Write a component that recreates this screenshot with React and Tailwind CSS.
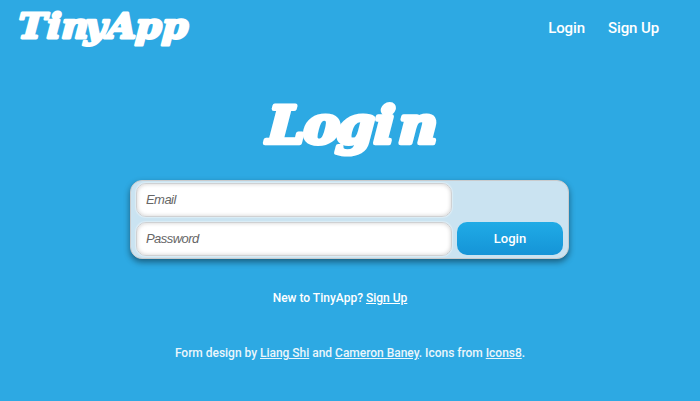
function Wordmark({ text, xs, baseline, size, stroke, stretch, className }) {
  return (
    <svg
      className={className}
      fill="white"
      stroke="white"
      strokeWidth={stroke}
      strokeLinejoin="round"
      fontFamily="'DejaVu Serif', serif"
      fontWeight="700"
      fontStyle="italic"
      fontSize={size}
    >
      <text x={xs} y="0" transform={`translate(0 ${baseline}) skewX(-3) scale(${stretch} 1)`}>{text}</text>
    </svg>
  );
}

function Field({ type, placeholder }) {
  return (
    <input
      type={type}
      placeholder={placeholder}
      className="block h-[34px] w-[316px] rounded-[10px] border border-[#cfd1d3] bg-white px-[9px] pb-px font-['Liberation_Sans',sans-serif] text-[13px] italic tracking-[-0.55px] shadow-[inset_0_0_4px_rgba(0,0,0,0.2),0_0_1px_1px_rgba(255,255,255,0.35)] outline-none placeholder:text-[#666666]"
    />
  );
}

export default function App() {
  return (
    <div className="flex h-[401px] w-[700px] flex-col overflow-hidden bg-[#2da9e3] font-[Roboto,sans-serif] font-medium text-white">
      <header className="flex h-14 shrink-0 items-center justify-between pr-[41px]">
        <Wordmark text="TinyApp" xs="16.5 43 56.5 78 99 125 149.5" baseline="38" size="34.5" stroke="2.8" stretch="1.08" className="h-14 w-[200px]" />
        <nav className="flex gap-[23px] text-[15px] leading-6 tracking-[-0.1px]">
          <a href="#login">Login</a>
          <a href="#signup">Sign Up</a>
        </nav>
      </header>
      <main className="flex flex-col items-center">
        <h1 className="mt-9">
          <Wordmark text="Login" xs="15.5 50 81 116.5 139.5" baseline="50.5" size="51" stroke="4.5" stretch="1.06" className="block h-[88px] w-[200px]" />
        </h1>
        <form className="mr-px flex h-[79px] w-[439px] items-end gap-[5px] rounded-xl border border-[#c9cbcd] bg-[#cae3f1] pb-[2px] pl-[5px] shadow-[0_3px_6px_rgba(0,0,0,0.45)]">
          <div className="flex flex-col gap-[5px]">
            <Field type="text" placeholder="Email" />
            <Field type="password" placeholder="Password" />
          </div>
          <button type="button" className="mb-px h-[33px] w-[106px] rounded-[10px] bg-linear-to-b from-[#20abe6] to-[#1594d7] text-[13px] font-medium">
            Login
          </button>
        </form>
        <p className="mt-[31px] mr-[20px] text-xs leading-4">
          New to TinyApp? <a href="#signup" className="underline">Sign Up</a>
        </p>
        <p className="mt-[39px] text-xs leading-4 tracking-[-0.02px] text-[#eaf6fc]">
          Form design by <a href="#liang" className="underline">Liang Shi</a> and{" "}
          <a href="#cameron" className="underline">Cameron Baney</a>. Icons from{" "}
          <a href="#icons8" className="underline">Icons8</a>.
        </p>
      </main>
    </div>
  );
}
